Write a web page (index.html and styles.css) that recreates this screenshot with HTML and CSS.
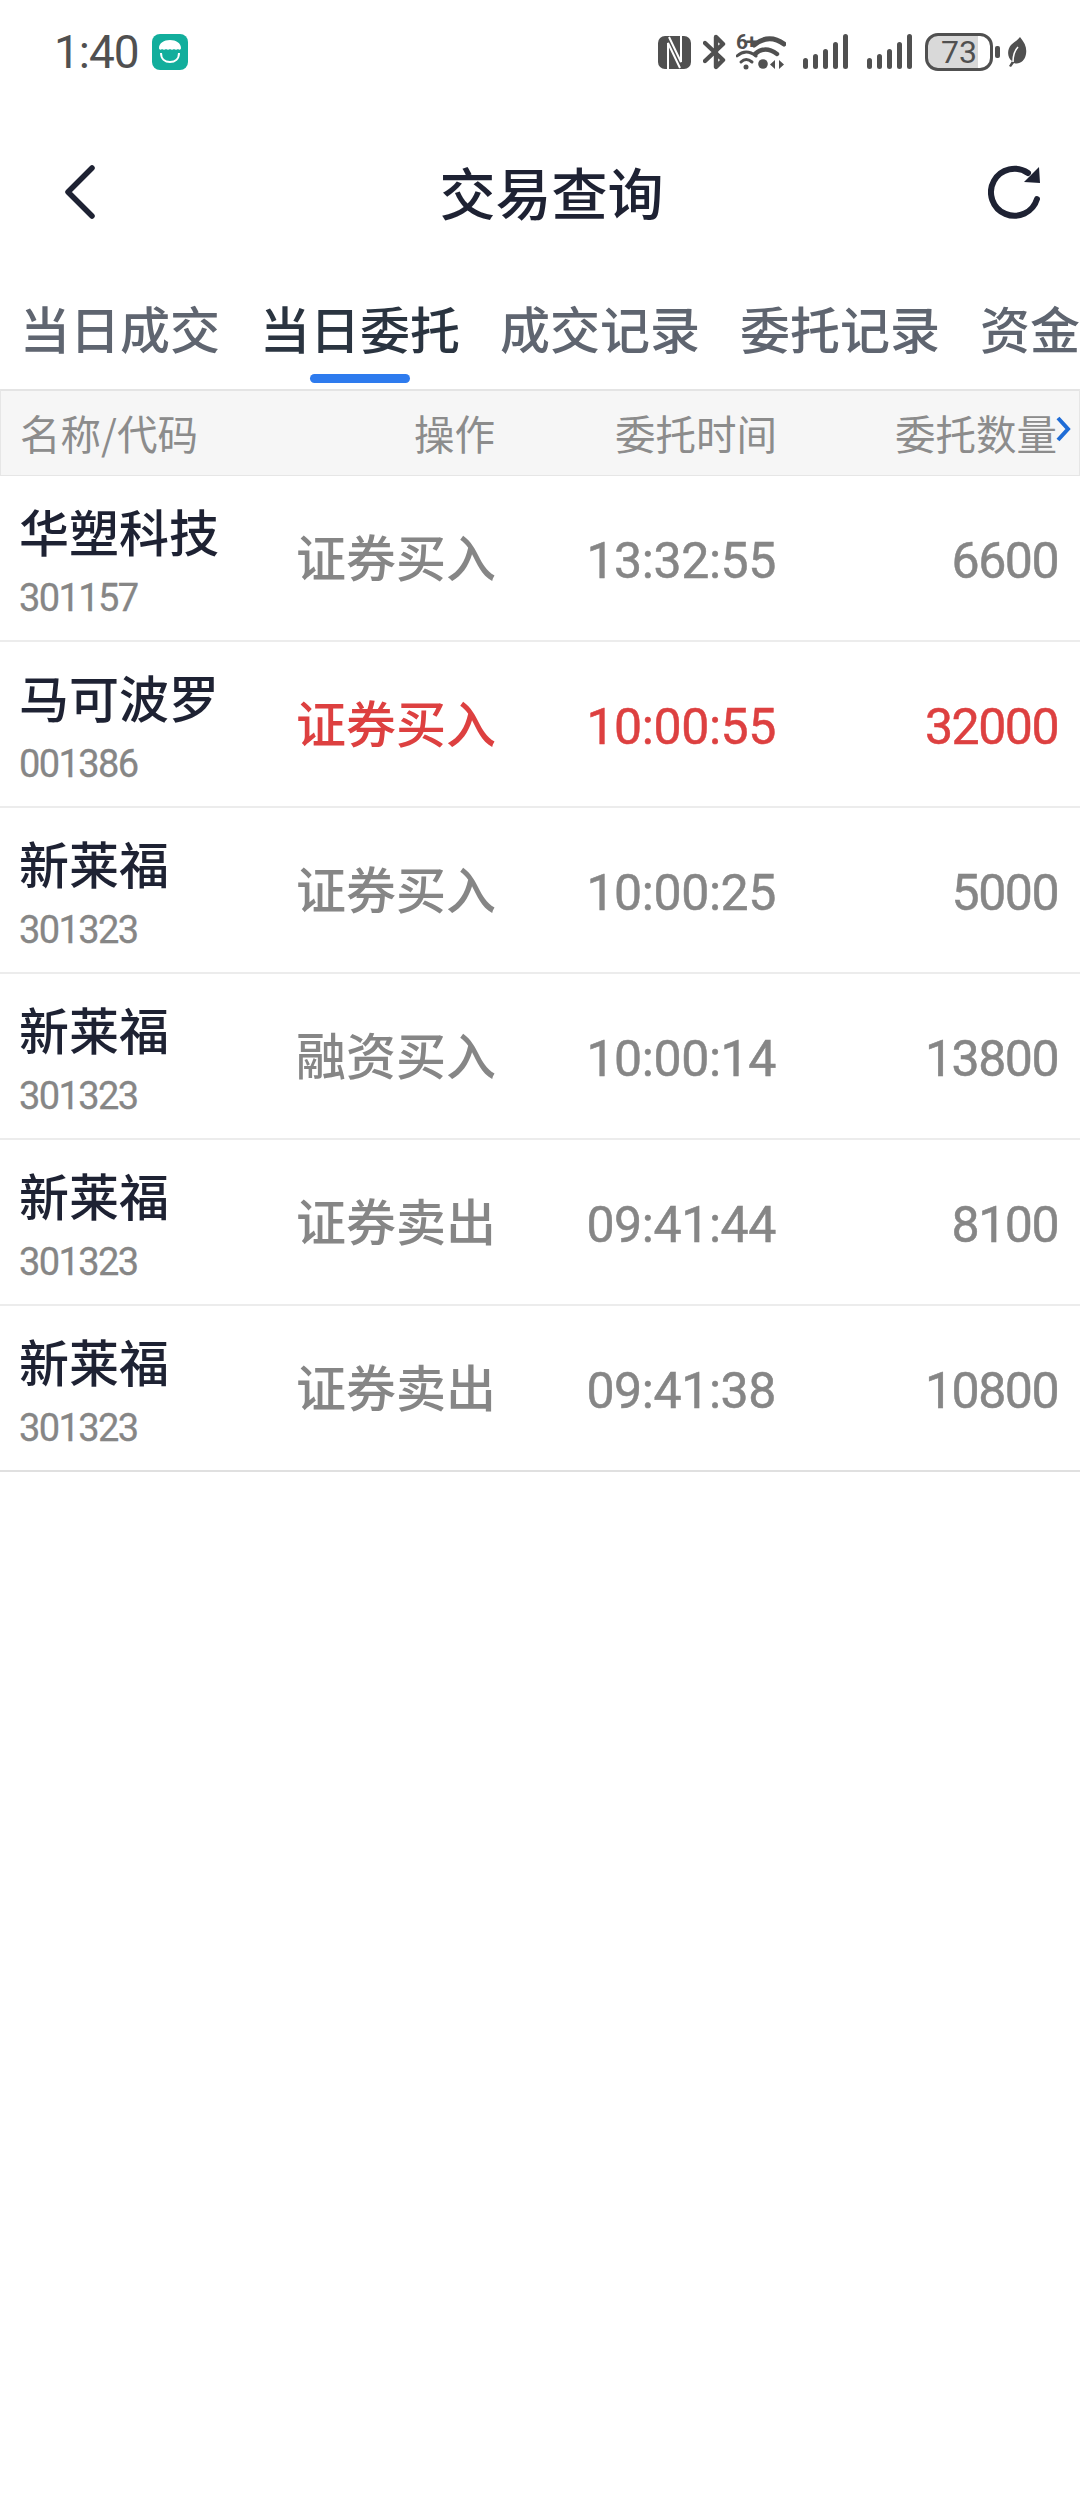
FILE: index.html
```html
<!DOCTYPE html>
<html lang="zh-CN">
    <head>
        <meta charset="UTF-8">
        <meta name="viewport" content="width=device-width, initial-scale=1.0">
        <title>交易查询</title>
        <link rel="stylesheet" href="styles.css">
    </head>
    <body>
        <div class="shell">
            <!-- 状态栏 -->
            <div class="status">
                <div class="status-left">
                    <span class="clock">1:40</span>
                    <svg class="app-icon" width="36" height="36" viewBox="0 0 36 36">
                        <rect width="36" height="36" rx="8" fill="#12ae9c"/>
                        <path d="M7 14c0-5 5-8 11-8s11 3 11 8c0 2-2 2-3 1-1 1-3 1-4 0-1 1-3 1-4 0-1 1-3 1-4 0-1 1-3 1-4 0-1 1-3 1-3-1z" fill="#fff"/>
                        <path d="M9 19c0 6 4 9 9 9s9-3 9-9" fill="none" stroke="#fff" stroke-width="2"/>
                    </svg>
                </div>
                <div class="status-right">
                    <svg class="nfc" width="33" height="33" viewBox="0 0 33 33">
                        <rect width="33" height="33" rx="7" fill="#505050"/>
                        <path d="M10 33V7l12 25M23 0v26L11 1" fill="none" stroke="#fff" stroke-width="2"/>
                    </svg>
                    <svg class="bt" width="23" height="36" viewBox="0 0 23 36">
                        <path d="M2 9l18 17-7 7V3l7 7L2 27" fill="none" stroke="#505050" stroke-width="4.400" stroke-linejoin="round" stroke-linecap="round"/>
                    </svg>
                    <div class="wifi">
                        <span class="wifi-gen">6+</span>
                        <svg width="50" height="36" viewBox="0 0 50 36">
                            <path d="M18 11Q33-1 48 10" fill="none" stroke="#505050" stroke-width="5" stroke-linecap="round"/>
                            <path d="M19 20Q29 11 41 20" fill="none" stroke="#505050" stroke-width="4.400" stroke-linecap="round"/>
                            <path d="M1 22Q10 14 20 22" fill="none" stroke="#505050" stroke-width="3" stroke-linecap="round"/>
                            <path d="M5 28Q10 23 16 28" fill="none" stroke="#505050" stroke-width="3" stroke-linecap="round"/>
                            <circle cx="10" cy="33" r="2.500" fill="#505050"/>
                            <circle cx="27" cy="30" r="4.800" fill="#505050"/>
                            <path d="M39 26v9l-5-4.500zM43 26v9l5-4.500z" fill="#505050"/>
                        </svg>
                    </div>
                    <svg class="signal" width="45" height="36" viewBox="0 0 45 36">
                        <rect x="0" y="24" width="5" height="11" rx="2.500" fill="#505050"/>
                        <rect x="10" y="20" width="5" height="15" rx="2.500" fill="#505050"/>
                        <rect x="20" y="15" width="5" height="20" rx="2.500" fill="#505050"/>
                        <rect x="30" y="8" width="5" height="27" rx="2.500" fill="#505050"/>
                        <rect x="40" y="0" width="5" height="35" rx="2.500" fill="#505050"/>
                    </svg>
                    <svg class="signal" width="45" height="36" viewBox="0 0 45 36">
                        <rect x="0" y="24" width="5" height="11" rx="2.500" fill="#505050"/>
                        <rect x="10" y="20" width="5" height="15" rx="2.500" fill="#505050"/>
                        <rect x="20" y="15" width="5" height="20" rx="2.500" fill="#505050"/>
                        <rect x="30" y="8" width="5" height="27" rx="2.500" fill="#505050"/>
                        <rect x="40" y="0" width="5" height="35" rx="2.500" fill="#505050"/>
                    </svg>
                    <div class="battery">73</div>
                    <span class="battery-cap"></span>
                    <svg class="leaf" width="20" height="30" viewBox="0 0 20 30">
                        <path d="M13 0C18 6 20 11 19 17 18 24 12 28 7 26L4 30 2 29 5 24C0 20 0 13 4 8 7 5 11 3 13 0z" fill="#505050"/>
                        <path d="M6 25C6 18 8 13 11 10" fill="none" stroke="#fff" stroke-width="1.600"/>
                    </svg>
                </div>
            </div>

            <!-- 标题栏 -->
            <div class="nav">
                <svg class="back" width="50" height="56" viewBox="0 0 50 56">
                    <path d="M27 4L3 28l24 24" fill="none" stroke="#1e2233" stroke-width="5.500" stroke-linecap="round" stroke-linejoin="round"/>
                </svg>
                <div class="nav-title">交易查询</div>
                <svg class="refresh" width="54" height="54" viewBox="0 0 54 54">
                    <path d="M40 8A23.500 23.500 0 1 0 49 34" fill="none" stroke="#1e2233" stroke-width="6" stroke-linecap="round"/>
                    <path d="M51 2l1 16-16-1z" fill="#1e2233"/>
                </svg>
            </div>

            <!-- 标签 -->
            <div class="tabs">
                <div class="tab">当日成交</div>
                <div class="tab active">当日委托</div>
                <div class="tab">成交记录</div>
                <div class="tab">委托记录</div>
                <div class="tab">资金</div>
            </div>

            <!-- 委托列表 -->
            <div class="table-head">
                <div class="name-head">名称/代码</div>
                <div class="col">操作</div>
                <div class="col">委托时间</div>
                <div class="col qty-head">委托数量
                    <svg class="more" width="16" height="26" viewBox="0 0 16 26">
                        <path d="M3 2l10 11L3 24" fill="none" stroke="#1f6cd6" stroke-width="4"/>
                    </svg>
                </div>
            </div>

            <div class="row">
                <div class="stock"><div class="stock-name">华塑科技</div><div class="stock-code">301157</div></div>
                <div class="op">证券买入</div>
                <div class="num time">13:32:55</div>
                <div class="num">6600</div>
            </div>
            <div class="row hot">
                <div class="stock"><div class="stock-name">马可波罗</div><div class="stock-code">001386</div></div>
                <div class="op">证券买入</div>
                <div class="num time">10:00:55</div>
                <div class="num">32000</div>
            </div>
            <div class="row">
                <div class="stock"><div class="stock-name">新莱福</div><div class="stock-code">301323</div></div>
                <div class="op">证券买入</div>
                <div class="num time">10:00:25</div>
                <div class="num">5000</div>
            </div>
            <div class="row">
                <div class="stock"><div class="stock-name">新莱福</div><div class="stock-code">301323</div></div>
                <div class="op">融资买入</div>
                <div class="num time">10:00:14</div>
                <div class="num">13800</div>
            </div>
            <div class="row">
                <div class="stock"><div class="stock-name">新莱福</div><div class="stock-code">301323</div></div>
                <div class="op">证券卖出</div>
                <div class="num time">09:41:44</div>
                <div class="num">8100</div>
            </div>
            <div class="row last">
                <div class="stock"><div class="stock-name">新莱福</div><div class="stock-code">301323</div></div>
                <div class="op">证券卖出</div>
                <div class="num time">09:41:38</div>
                <div class="num">10800</div>
            </div>
        </div>
    </body>
</html>
```

FILE: styles.css
```css
* {
    margin: 0;
    padding: 0;
    box-sizing: border-box;
}

body {
    background-color: #fff;
    font-family: "Noto Sans CJK SC", "Noto Sans", sans-serif;
}

.shell {
    width: 1080px;
    height: 2504px;
    overflow: hidden;
}

/* 状态栏 */
.status {
    display: flex;
    justify-content: space-between;
    align-items: center;
    height: 104px;
    padding: 0 53px 0 54px;
    color: #505050;
}

.status-left {
    display: flex;
    align-items: center;
    gap: 13px;
}

.clock {
    font: 400 46px/1 Roboto, sans-serif;
    letter-spacing: -1px;
}

.status-right {
    display: flex;
    align-items: center;
}

.bt {
    margin-left: 12px;
}

.wifi {
    display: flex;
    margin-left: 10px;
    position: relative;
}

.wifi-gen {
    position: absolute;
    top: -2px;
    left: 0;
    font: 700 21px/1 Roboto, sans-serif;
    letter-spacing: -2px;
}

.signal {
    margin-left: 17px;
}

.signal + .signal {
    margin-left: 19px;
}

.battery {
    width: 68px;
    height: 38px;
    margin-left: 13px;
    border: 3px solid #505050;
    border-radius: 13px;
    background-image: linear-gradient(90deg, #d9d9d9 80%, transparent 80%);
    font: 400 32px/32px Roboto, sans-serif;
    text-align: center;
}

.battery-cap {
    width: 5px;
    height: 12px;
    margin-left: 2px;
    border-radius: 2px;
    background-color: #505050;
}

.leaf {
    margin-left: 7px;
}

/* 标题栏 */
.nav {
    display: flex;
    justify-content: space-between;
    align-items: center;
    height: 176px;
    padding: 0 38px 0 65px;
}

.nav-title {
    margin-bottom: 3px;
    color: #1e2233;
    font-size: 56px;
    font-weight: 500;
    line-height: 80px;
}

/* 标签 */
.tabs {
    display: flex;
    gap: 40px;
    height: 109px;
    padding: 12px 0 0 20px;
    white-space: nowrap;
}

.tab {
    display: flex;
    flex-direction: column;
    align-items: center;
    flex-shrink: 0;
    color: #5f6570;
    font-size: 50px;
    font-weight: 500;
    line-height: 70px;
}

.tab.active {
    color: #2a3440;
}

.tab.active::after {
    content: "";
    width: 100px;
    height: 9px;
    margin-top: 12px;
    border-radius: 5px;
    background-color: #2e7bee;
}

/* 委托列表 */
.table-head,
.row {
    display: grid;
    grid-template-columns: 276px 220px 280px 1fr;
    align-items: center;
    padding-right: 22px;
    text-align: right;
}

.table-head {
    grid-template-columns: 276px 218px 282px 1fr;
    height: 87px;
    padding-bottom: 2px;
    border: 1px solid #e6e6e6;
    border-top: 2px solid #e4e4e4;
    background-color: #f6f6f6;
    color: #8c8c8c;
    font-size: 40.500px;
}

.name-head {
    padding-left: 19px;
    text-align: left;
}

.qty-head {
    position: relative;
}

.more {
    position: absolute;
    top: 13px;
    right: -14px;
}

.row {
    height: 166px;
    border-bottom: 2px solid #ececec;
    color: #868686;
}

.row.last {
    border-bottom-color: #e0e0e0;
}

.row.hot .op,
.row.hot .num {
    color: #dd4040;
}

.stock {
    padding-left: 19px;
    text-align: left;
}

.stock-name {
    color: #1e2233;
    font-size: 50px;
    font-weight: 500;
    line-height: 66px;
}

.stock-code {
    margin-top: 14px;
    font: 400 38px/42px Roboto, sans-serif;
    letter-spacing: -1.600px;
    -webkit-text-stroke: 0.300px currentColor;
}

.op {
    padding-bottom: 6px;
    font-size: 50px;
    font-weight: 500;
    line-height: 66px;
}

.num {
    padding-top: 6px;
    font: 400 50px/1 Roboto, sans-serif;
    letter-spacing: -1.500px;
    -webkit-text-stroke: 0.500px currentColor;
}

.num.time {
    letter-spacing: -0.400px;
}
```
